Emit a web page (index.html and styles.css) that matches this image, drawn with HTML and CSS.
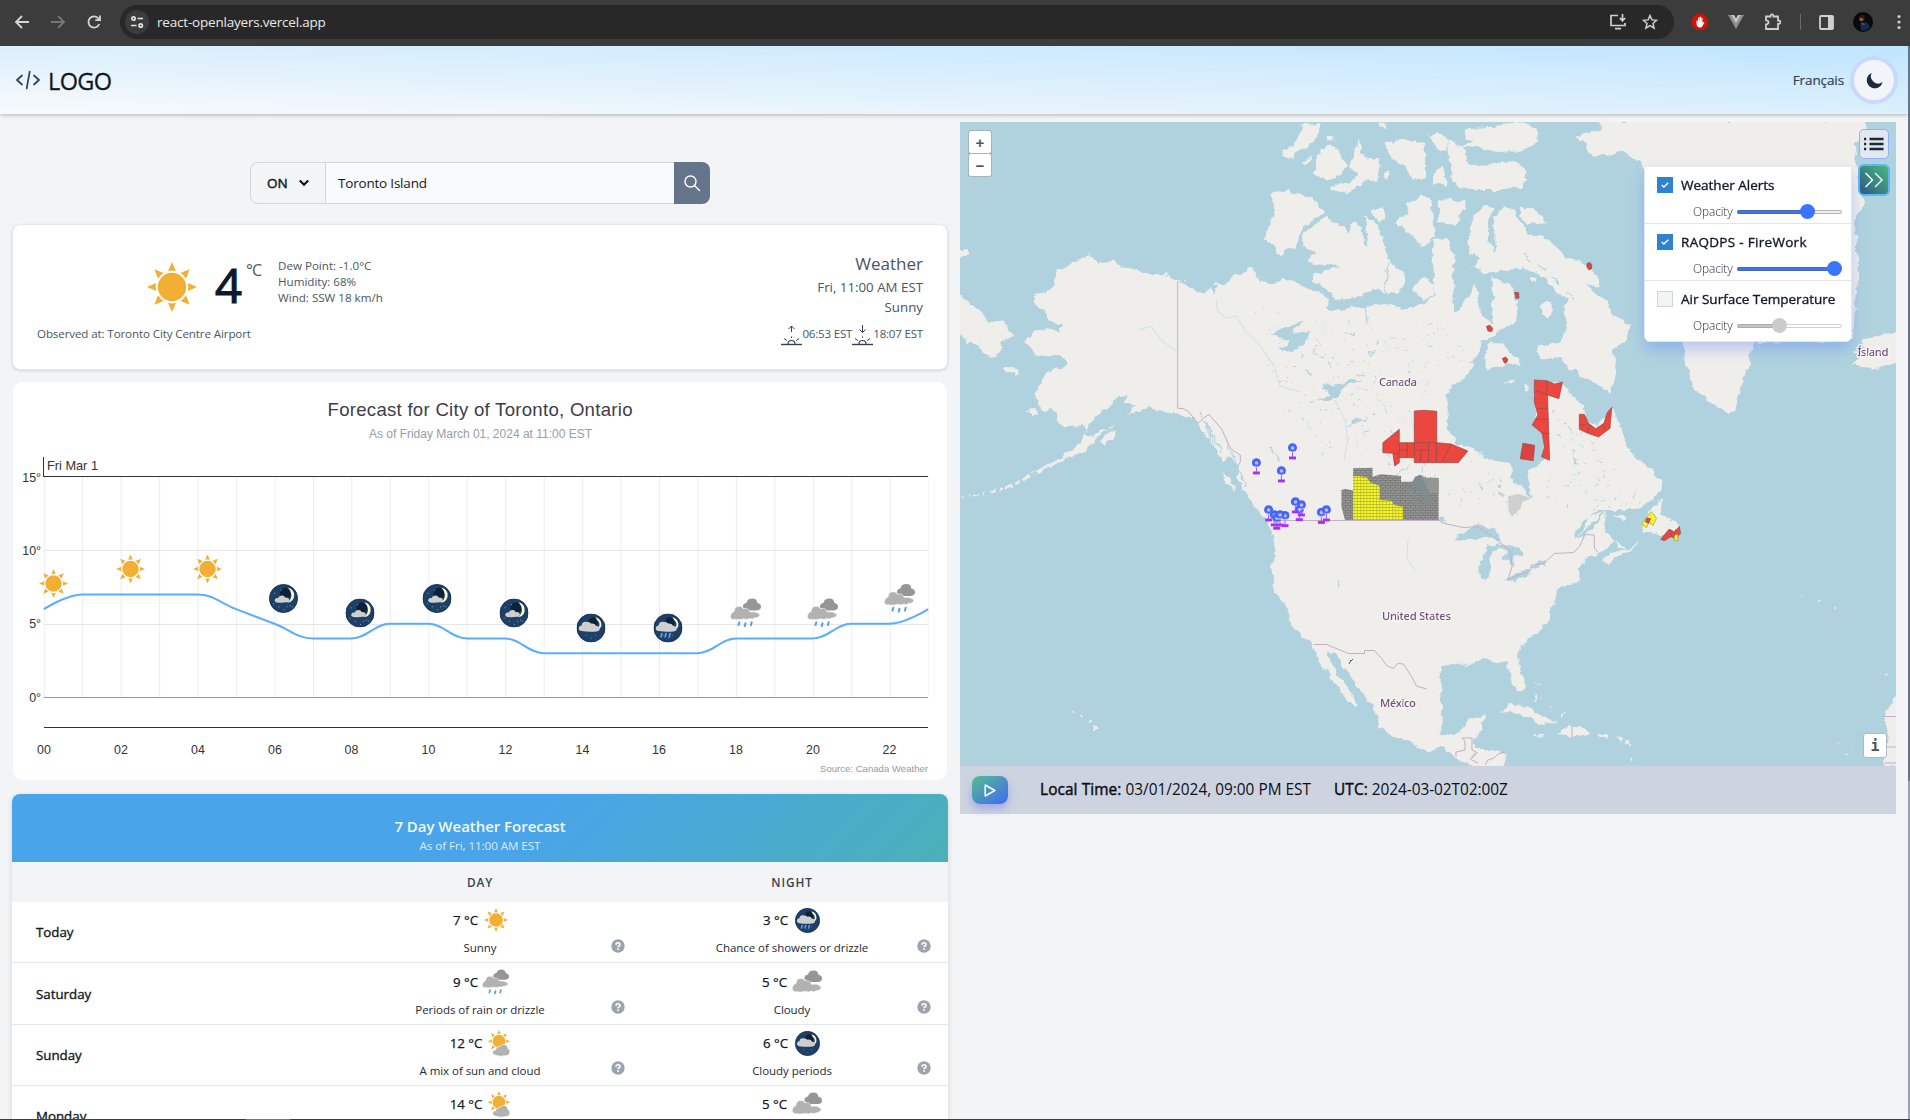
FILE: index.html
```html
<!DOCTYPE html>
<html lang="en">
<head>
<meta charset="utf-8">
<title>Weather map</title>
<link rel="stylesheet" href="styles.css">
</head>
<body>
<svg class="sprite" aria-hidden="true">
  <symbol id="sun" viewBox="0 0 50 50">
    <circle cx="25" cy="25" r="14.2" fill="#f2af33"/>
    <g fill="#f2af33">
      <path d="M25 0l4 9.2q-4-1.2-8 0zM25 50l4-9.200q-4 1.200-8 0zM0 25l9.200-4q-1.200 4 0 8zM50 25l-9.200-4q1.200 4 0 8z"/>
      <path transform="rotate(45 25 25)" d="M25 0l4 9.200q-4-1.200-8 0zM25 50l4-9.200q-4 1.200-8 0zM0 25l9.200-4q-1.200 4 0 8zM50 25l-9.200-4q1.200 4 0 8z"/>
    </g>
  </symbol>
  <symbol id="clouds" viewBox="0 0 30 24">
    <path d="M12.500 9q-.5-4 3.500-4.500 1-4 5.500-4 4.500 0 5 4.300 3.500.5 3.500 3.700t-4 3.500H16z" fill="#969696"/>
    <path d="M4 22q-4-.5-3.700-4T4 13.500q.3-5 5-5 3 0 4 2.300 5-1.500 6.500 3.700 5-1.500 9.500 2 .5 4-5 4.300-2 1.500-4.500.3-3 1.500-6 .2-4.500 1.400-9.500.2z" fill="#b2b2b2" stroke="#fff" stroke-width=".5"/>
  </symbol>
  <symbol id="rain" viewBox="0 0 30 28">
    <path d="M12.500 8.500q-.5-3.500 3.500-4.500 1-4 5.500-4 4.500 0 5 4.300 3.500.5 3.500 3.700t-4 3.500H16z" fill="#969696"/>
    <path d="M4 20.500q-4-.5-3.700-3.500T4 12.500q.3-5 5-5 3 0 4 2.300 5-1.500 6.500 3.200 5-1 9.300 2 .5 3.500-5 3.800-2 1.500-4.500.5-3 1.500-6 .3-4.500 1.400-9.300.4z" fill="#b2b2b2" stroke="#fff" stroke-width=".5"/>
    <path d="M9 23l-.8 2.700M15 24l-.8 2.700M21 23l-.8 2.700" stroke="#5aa2e6" stroke-width="2" stroke-linecap="round"/>
  </symbol>
  <symbol id="mix" viewBox="0 0 30 30">
    <use href="#sun" x="3" y="0" width="25" height="25"/>
    <path d="M12 28q-4-.5-3.500-3.500T12 22q.5-4 4.500-3.500 1.500-3 5-2.500 4 .5 4 4.500 3 1.500 2 5t-6 3q-4 1.500-9.500-.500z" fill="#b2b2b2" stroke="#fff" stroke-width=".7"/>
  </symbol>
  <symbol id="night" viewBox="0 0 28 28">
    <circle cx="14" cy="14" r="13.600" fill="#1c4068" stroke="#122c4a" stroke-width=".8"/>
    <circle cx="16" cy="9" r="5.500" fill="#0d2138"/>
    <path d="M18.300 3.500q6.200 1.500 6 7.500t-6.500 7q4-3.500 3.800-7.500t-3.300-7z" fill="#fbf9d0"/>
    <path d="M7.500 17.800q-2.500-.5-1.800-2.800 1-1.800 3-1.300 1-2.800 4-2.500 2.300.2 3 2 3.300-.5 4 2.300 0 2.300-3 2.200-5 .8-9.200.1z" fill="#cfcfcf"/>
    <path d="M5 9h1M9 22h1M14 25h1M20 21h1M4 19h1M11 6h1M22 22h1M17 22h1" stroke="#8fa9c4" stroke-width=".9"/>
  </symbol>
  <symbol id="night-cloud" viewBox="0 0 28 28">
    <circle cx="14" cy="14" r="13.600" fill="#1c4068" stroke="#122c4a" stroke-width=".8"/>
    <circle cx="16" cy="8" r="4.500" fill="#0d2138"/>
    <path d="M18.300 3.500q6.200 1.500 5.700 8.500-1 3-3.500 3.500 3-5 .8-7.500t-3-4.500z" fill="#fbf9d0"/>
    <path d="M5 17q-3-.3-2.800-3T5 11.500Q5 8 9 8t5 1.700q4-.7 5 2.300 3.500 0 3.500 2.500t-3 2.800q-7 1-14.500-.3z" fill="#cfcfcf"/>
    <path d="M9 21h1M14 24h1M18 21h1" stroke="#6587ab" stroke-width=".9"/>
  </symbol>
  <symbol id="night-rain" viewBox="0 0 28 28">
    <use href="#night-cloud" width="28" height="28"/>
    <path d="M8 19.500l-.7 3M12 19.500l-.7 3M16 19.500l-.7 3" stroke="#5aa2f0" stroke-width="1.700" stroke-linecap="round"/>
  </symbol>
  <symbol id="help" viewBox="0 0 14 14">
    <circle cx="7" cy="7" r="6.700" fill="#9ca3af"/>
    <path d="M5 5.700q0-2 2-2t2 1.700-1.800 1.900v.9" fill="none" stroke="#fff" stroke-width="1.600"/>
    <rect x="6.300" y="9.300" width="1.700" height="1.600" fill="#fff"/>
  </symbol>
  <symbol id="pin" viewBox="-5 -5 10 17">
    <path d="M0 4v5" stroke="#9a55f5"/>
    <rect x="-3.500" y="8.700" width="7" height="3" fill="#a92ffb"/>
    <circle r="4.500" fill="#4664fb"/>
    <circle cx=".1" cy=".2" r="1.800" fill="#b9c4fc"/>
    <path d="M-2.500 3.300q2.500 2.300 5 0" fill="none" stroke="#e5d9fb" stroke-width=".9"/>
  </symbol>
</svg>

<div class="browser">
  <div class="nav">
    <svg width="16" height="16" viewBox="0 0 16 16" fill="none" stroke="#d5d5d5" stroke-width="1.800"><path d="M15 8H2.500M8 2L2 8l6 6"/></svg>
    <svg width="16" height="16" viewBox="0 0 16 16" fill="none" stroke="#777" stroke-width="1.800"><path d="M1 8h12.500M8 2l6 6-6 6"/></svg>
    <svg width="16" height="16" viewBox="0 0 16 16" fill="none" stroke="#d5d5d5" stroke-width="1.800"><path d="M13.300 10A5.600 5.600 0 1 1 12.500 4.500L14 6M14 1.500V6.200H9.300"/></svg>
  </div>
  <div class="omnibox">
    <span class="site"><svg width="14" height="14" viewBox="0 0 14 14" fill="none" stroke="#e2e2e2" stroke-width="1.700"><circle cx="3.500" cy="3.500" r="1.700"/><path d="M7.500 3.500H13M1 10.500h5.500"/><circle cx="10.700" cy="10.500" r="1.700"/></svg></span>
    <span class="url">react-openlayers.vercel.app</span>
    <span class="omni-icons">
      <svg width="18" height="18" viewBox="0 0 18 18" fill="none" stroke="#cfcfcf" stroke-width="1.700"><path d="M9 2.500H2v10h14V10M6 15.700h6M13.500 1v6.500M10.800 5l2.700 2.700L16.200 5"/></svg>
      <svg width="16" height="16" viewBox="0 0 16 16" fill="none" stroke="#cfcfcf" stroke-width="1.500"><path d="M8 1.500l1.900 4.400 4.700.4-3.600 3.100 1.100 4.700L8 11.600l-4.100 2.500L5 9.400 1.400 6.300l4.700-.4z"/></svg>
    </span>
  </div>
  <div class="exts">
    <svg width="16" height="16" viewBox="0 0 16 16"><path d="M4.700 0h6.600L16 4.700v6.600L11.300 16H4.700L0 11.300V4.700z" fill="#d71005"/><path d="M4.500 9V6.500h1.200V8l.3.100V3.700h1.300V7h.3V2.700H9V7h.3V3.700h1.200V9l1-1.200 1 .5-2.300 4.300q-.6.900-2 .9-3.700 0-3.700-4.500z" fill="#fff"/></svg>
    <svg width="16" height="16" viewBox="0 0 16 16"><path d="M0 1h6l2 3.800L10 1h6L8 15z" fill="#8e8e8e"/><path d="M3.300 1H6l2 3.800L10 1h2.700L8 9.300z" fill="#c9c9c9"/></svg>
    <svg width="18" height="18" viewBox="0 0 18 18" fill="none" stroke="#cfcfcf" stroke-width="1.800"><path d="M2 3.500h4.500q-.2-2 1.500-2t1.500 2H14v4q2.300-.2 2.300 1.700T14 11v5H2v-4.500q2.500-.3 2.500-2.200T2 7.300z"/></svg>
    <i class="sep"></i>
    <svg width="15" height="15" viewBox="0 0 15 15"><rect x="1" y="1" width="13" height="13" rx="1" fill="none" stroke="#cfcfcf" stroke-width="1.800"/><path d="M9 1h5v13H9z" fill="#cfcfcf"/></svg>
    <svg width="20" height="20" viewBox="0 0 20 20"><circle cx="10" cy="10" r="10" fill="#07090c"/><path d="M7 11q5-2 8 .5l2 4q-4 4-9 3z" fill="#0f2d52"/><circle cx="8.500" cy="7" r="2.300" fill="#8a5a41"/><path d="M6 6q1-4 5-3l1 5q-3-3-6-2z" fill="#2c1710"/><path d="M8 11l4 1-2 1z" fill="#8a5a41"/></svg>
    <svg width="4" height="16" viewBox="0 0 4 16" fill="#cfcfcf"><circle cx="2" cy="2.500" r="1.600"/><circle cx="2" cy="8" r="1.600"/><circle cx="2" cy="13.500" r="1.600"/></svg>
  </div>
</div>

<div class="viewport">
<div class="page">
  <header class="header">
    <a class="brand"><svg width="24" height="20" viewBox="0 0 24 20" fill="none" stroke="#334155" stroke-width="1.700" stroke-linecap="round" stroke-linejoin="round"><path d="M6 5.500L1 10l5 4.500M18 5.500L23 10l-5 4.500M13.700 1.500l-3 17"/></svg><span>LOGO</span></a>
    <div class="tools"><span class="lang">Français</span>
      <button class="moon"><svg width="17" height="17" viewBox="0 0 17 17"><path d="M6.500.7A8 8 0 1 0 16.300 11 7.300 7.300 0 0 1 6.500.7z" fill="#1e293b" transform="rotate(-6 8 8)"/></svg></button></div>
  </header>

  <main class="columns">
    <section class="left">
      <form class="search">
        <div class="prov"><span>ON</span><svg width="10" height="8" viewBox="0 0 10 8" fill="none" stroke="#111" stroke-width="2.200"><path d="M.8 1.500L5 5.700l4.200-4.200"/></svg></div>
        <div class="city">Toronto Island</div>
        <div class="go"><svg width="18" height="18" viewBox="0 0 18 18" fill="none" stroke="#fff" stroke-width="1.400" stroke-linecap="round"><circle cx="7.500" cy="7.500" r="5.500"/><path d="M11.700 11.700l4.800 4.800"/></svg></div>
      </form>

      <article class="card current">
        <div class="now">
          <div class="now-row">
            <svg class="big-sun" width="50" height="50"><use href="#sun"/></svg>
            <span class="temp">4</span><span class="unit">°C</span>
            <div class="details"><p>Dew Point: -1.0°C</p><p>Humidity: 68%</p><p>Wind: SSW 18 km/h</p></div>
          </div>
          <p class="observed">Observed at: Toronto City Centre Airport</p>
        </div>
        <div class="cond">
          <h2>Weather</h2>
          <p>Fri, 11:00 AM EST</p>
          <p>Sunny</p>
          <div class="suntimes">
            <svg width="21" height="22" viewBox="0 0 21 22" fill="none" stroke="#374151"><path d="M0 20.500h21" stroke-width="1.400"/><path d="M7 20a3.500 3.500 0 0 1 7 0" stroke-width="1.200"/><path d="M10.500 8V2M7.500 5l3-3 3 3M3 14.500l3 2.200M18 14.500l-3 2.200M10.500 12.500v1.500"/></svg><span>06:53 EST</span>
            <svg width="21" height="22" viewBox="0 0 21 22" fill="none" stroke="#374151"><path d="M0 20.500h21" stroke-width="1.400"/><path d="M7 20a3.500 3.500 0 0 1 7 0" stroke-width="1.200"/><path d="M10.500 1v7M7.500 5.500l3 3 3-3M3 14.500l3 2.200M18 14.500l-3 2.200M10.500 12.500v1.500"/></svg><span>18:07 EST</span>
          </div>
        </div>
      </article>

      <article class="chart">
        <svg width="934" height="398" viewBox="13 382 934 398">
          <defs><pattern id="hours" x="43.800" y="0" width="38.450" height="10" patternUnits="userSpaceOnUse"><path d="M.500 0v10" stroke="#ececee"/></pattern></defs>
          <text class="c-title" x="480" y="416" text-anchor="middle" textLength="305">Forecast for City of Toronto, Ontario</text>
          <text class="c-sub" x="480.500" y="438" text-anchor="middle" textLength="223">As of Friday March 01, 2024 at 11:00 EST</text>
          <rect x="43.600" y="477" width="885" height="220" fill="url(#hours)"/>
          <path d="M44 550.500h884M44 624.500h884" stroke="#e6e6e6"/>
          <path d="M44 697.500h884" stroke="#999"/>
          <path d="M43.500 457v20M43 476.500h885M44 727.500h884" stroke="#333" fill="none"/>
          <g class="axis">
            <text x="47" y="470" textLength="51">Fri Mar 1</text>
            <g text-anchor="end"><text x="41" y="481.500">15°</text><text x="41" y="554.500">10°</text><text x="41" y="628">5°</text><text x="41" y="701.500">0°</text></g>
            <g text-anchor="middle"><text x="44" y="754">00</text><text x="121" y="754">02</text><text x="198" y="754">04</text><text x="275" y="754">06</text><text x="351.500" y="754">08</text><text x="428.500" y="754">10</text><text x="505.500" y="754">12</text><text x="582.500" y="754">14</text><text x="659" y="754">16</text><text x="736" y="754">18</text><text x="813" y="754">20</text><text x="889.500" y="754">22</text></g>
          </g>
          <text class="c-src" x="928" y="772" text-anchor="end" textLength="108">Source: Canada Weather</text>
          <path fill="none" stroke="#5aaeff" stroke-width="2" d="M43.800 609.100C43.800 609.100 66.900 594.400 82.300 594.400H197.600C213 594.400 220.700 603.200 236.100 609.100C251.500 615 259.100 617.900 274.500 623.800C289.900 629.700 297.600 638.500 313 638.500H351.400C366.800 638.500 374.500 623.800 389.900 623.800H428.300C443.700 623.800 451.400 638.500 466.800 638.500H505.200C520.600 638.500 528.300 653.200 543.700 653.200H697.500C712.900 653.200 720.500 638.500 735.900 638.500H812.800C828.200 638.500 835.900 623.800 851.300 623.800H889.700C905.100 623.800 928.200 609.100 928.200 609.100"/>
          <use href="#sun" x="39" y="569" width="29" height="29"/><use href="#sun" x="116" y="554.500" width="29" height="29"/><use href="#sun" x="193" y="554.500" width="29" height="29"/>
          <use href="#night" x="269" y="584" width="29" height="29"/><use href="#night" x="345.500" y="598.500" width="29" height="29"/><use href="#night" x="422.500" y="584" width="29" height="29"/><use href="#night" x="499.500" y="598.500" width="29" height="29"/>
          <use href="#night-cloud" x="576.500" y="613.500" width="29" height="29"/><use href="#night-rain" x="653.500" y="613.500" width="29" height="29"/>
          <use href="#rain" x="730" y="598" width="31" height="30"/><use href="#rain" x="807" y="598" width="31" height="30"/><use href="#rain" x="884" y="583.500" width="31" height="30"/>
        </svg>
      </article>

      <article class="week">
        <div class="week-head"><h3>7 Day Weather Forecast</h3><p>As of Fri, 11:00 AM EST</p></div>
        <div class="row cols"><span></span><span>DAY</span><span>NIGHT</span></div>
        <div class="row">
          <b class="day">Today</b>
          <div class="cell"><div class="t">7 °C<svg width="28" height="28"><use href="#sun" x="3" y="2" width="24" height="24"/></svg></div><p>Sunny</p><svg class="help" width="14" height="14"><use href="#help"/></svg></div>
          <div class="cell"><div class="t">3 °C<svg width="31" height="28"><use href="#night-rain" x="5" y="2" width="25" height="25"/></svg></div><p>Chance of showers or drizzle</p><svg class="help" width="14" height="14"><use href="#help"/></svg></div>
        </div>
        <div class="row">
          <b class="day">Saturday</b>
          <div class="cell"><div class="t">9 °C<svg width="28" height="28"><use href="#rain" x="1" y="1" width="27" height="26"/></svg></div><p>Periods of rain or drizzle</p><svg class="help" width="14" height="14"><use href="#help"/></svg></div>
          <div class="cell"><div class="t">5 °C<svg width="33" height="28"><use href="#clouds" x="3" y="2" width="30" height="24"/></svg></div><p>Cloudy</p><svg class="help" width="14" height="14"><use href="#help"/></svg></div>
        </div>
        <div class="row">
          <b class="day">Sunday</b>
          <div class="cell"><div class="t">12 °C<svg width="27" height="28"><use href="#mix" x="0" y="1" width="27" height="27"/></svg></div><p>A mix of sun and cloud</p><svg class="help" width="14" height="14"><use href="#help"/></svg></div>
          <div class="cell"><div class="t">6 °C<svg width="31" height="28"><use href="#night-cloud" x="5" y="2" width="25" height="25"/></svg></div><p>Cloudy periods</p><svg class="help" width="14" height="14"><use href="#help"/></svg></div>
        </div>
        <div class="row">
          <b class="day">Monday</b>
          <div class="cell"><div class="t">14 °C<svg width="27" height="28"><use href="#mix" x="0" y="1" width="27" height="27"/></svg></div></div>
          <div class="cell"><div class="t">5 °C<svg width="33" height="28"><use href="#clouds" x="3" y="2" width="30" height="24"/></svg></div></div>
        </div>
      </article>
    </section>

    <section class="right">
      <div class="map">
        <svg class="canvas" width="936" height="644" viewBox="960 122 936 644">
          <defs>
            <filter id="coast" filterUnits="userSpaceOnUse" x="940" y="100" width="980" height="690"><feTurbulence type="fractalNoise" baseFrequency=".11" numOctaves="3" seed="4"/><feDisplacementMap in="SourceGraphic" scale="8" xChannelSelector="R" yChannelSelector="G"/></filter>
            <filter id="scatter" filterUnits="userSpaceOnUse" x="940" y="100" width="980" height="690"><feTurbulence type="fractalNoise" baseFrequency=".035" numOctaves="3" seed="9"/><feDisplacementMap in="SourceGraphic" scale="60" xChannelSelector="R" yChannelSelector="G"/></filter>
            <pattern id="parcels" width="3.200" height="3" patternUnits="userSpaceOnUse"><path d="M0 .5h3.200M.5 0v3" stroke="#77771c" stroke-width=".6" opacity=".6"/></pattern>
            <pattern id="blocks" width="5" height="5" patternUnits="userSpaceOnUse"><path d="M0 .5h5M.5 0v3M3 3v2M0 3h5" stroke="#555" stroke-width=".6" opacity=".6" fill="none"/></pattern>
            <pattern id="lakes" width="67" height="53" patternUnits="userSpaceOnUse"><path fill="none" stroke="#b0d2de" stroke-width="1.300" d="M3 5l3 1M14 11l1 3M25 3l4 2M41 9l2-2M55 6l1 3M61 17l3-1M8 22l2 2M20 27l5-2M33 19l2 1M47 25l1 3M36 31l4 1M5 38l2-1M17 43l1 3M28 40l3 2M44 44l4-2M57 37l2 2M62 48l1-2M12 50l3 1M52 14l2 1"/></pattern>
          </defs>
          <rect x="960" y="122" width="936" height="644" fill="#b0d2de"/>
          <g fill="#f0eeea" filter="url(#coast)">
            <g transform="translate(960 120) scale(.33333)">
              <path d="M220 545L222 520 258 520 275 500 295 455 320 440 335 425 370 420 387 400 405 410 420 430 445 425 462 425 480 440 510 440 540 455 575 465 620 462 650 483 680 488 715 515 735 525 750 500 770 490 800 490 830 465 850 460 872 440 895 470 915 490 940 495 970 475 1000 485 1040 505 1080 520 1110 540 1095 560 1110 572 1150 572 1180 560 1210 565 1240 545 1280 555 1340 570 1390 570 1460 590 1460 1220 950 1220 905 1180 870 1150 850 1110 835 1080 835 1040 810 1010 790 1020 770 1000 750 960 720 920 690 890 650 880 600 870 560 865 525 875 490 885 475 905 455 925 430 930 415 950 390 975 360 1000 320 1015 290 1030 250 1050 245 1045 290 1020 330 995 365 965 380 930 360 915 300 920 290 880 270 865 260 880 235 850 228 820 240 790 255 765 280 750 315 740 315 720 300 705 260 712 225 705 215 685 195 665 225 635 265 628 300 640 305 610 265 600 255 570z"/>
              <path d="M-30 505L0 525 40 560 75 590 85 605 125 605 160 645 140 655 125 665 120 690 108 715 95 710 65 690 55 670 20 668 0 635-30 620zM-20 385L20 388 30 405 0 418-20 415zM128 742L155 742 180 758 165 765 130 750zM203 870l27-5 5 14-20 4zM420 965l25-30 20-8-5 30-30 20zM785 1060l25 5 5 30 12 22-25-20z"/>
              <path d="M932 222L985 210 1000 222 1040 228 1060 232 1090 275 1060 300 1030 325 1015 350 1005 385 975 395 962 410 945 375 915 360 925 320 942 280 945 258z"/>
              <path d="M1105 283L1115 300 1155 320 1165 340 1180 310 1205 320 1215 375 1225 380 1215 285 1245 305 1260 330 1275 400 1300 435 1335 460 1335 495 1310 520 1240 510 1210 515 1190 535 1125 540 1115 515 1060 490 1058 465 1100 450 1140 445 1120 432 1060 435 1040 415 1070 400 1030 380 1030 345 1060 315z"/>
              <path d="M1395 475L1425 510 1420 530 1390 540 1365 515zM1240 265L1270 262 1275 290 1260 305 1235 280zM1030 15L1080 10 1085 20 1060 70 1040 80 1015 90 1000 120 965 110 975 85 1000 75zM1052 105L1040 140 1025 135zM1085 85L1110 75 1140 100 1165 140 1130 170 1095 180 1055 165 1070 110zM1195 55L1215 120 1255 110 1260 130 1250 180 1210 185 1170 215 1130 215 1110 200 1180 180 1190 160 1170 140 1185 95zM1280 70L1340 60 1395 75 1395 175 1355 180 1340 145 1310 125 1285 100zM1275 155l15 10-10 15-12-10zM1100 48h20v10h-20zM1255 8l20 0 5 22-15-10z"/>
              <path fill="none" stroke="#f0eeea" stroke-width="9" stroke-dasharray="22 9 10 12" d="M250 1046L215 1063 190 1080 150 1100 100 1112"/>
              <path fill="none" stroke="#f0eeea" stroke-width="5" stroke-dasharray="14 12 6 14" d="M100 1112L50 1125 5 1130"/>
            </g>
            <g transform="translate(1360 110) scale(.35077 .33333)">
              <path d="M0 145L35 140 55 170 45 210 5 210zM195 75L230 68 255 95 250 120 215 110zM255 95L290 110 310 160 330 175 380 160 445 152 475 185 470 230 415 240 340 240 270 230 255 150zM280 120L320 90 290 65 310 55 380 50 450 30 505 60 505 95 460 125 390 125 310 110zM230 170L255 210 245 235 205 220 215 180zM225 268L300 272 300 290 275 345 225 340zM130 290L150 270 190 260 205 280 210 380 180 415 150 385 130 365 105 340 110 320 140 310z"/>
              <path d="M310 370L325 315 355 288 388 290 365 330 365 390 390 430 380 350 385 320 410 295 440 295 450 330 470 350 480 375 520 380 545 400 570 420 590 450 640 460 680 500 680 530 640 520 700 570 720 610 770 650 755 700 720 715 730 790 715 855 690 830 620 790 570 745 510 745 505 715 550 700 575 690 590 640 580 600 590 570 560 545 540 520 510 490 470 475 420 480 350 490 320 470 340 445 315 430z"/>
              <path d="M455 290L510 305 530 340 480 345 460 320zM515 580l20-8 15 20-15 28-18-10zM355 775L370 700 400 700 465 765 420 760 390 770zM410 825L440 800 430 820zM468 820l8 0 5 20-8 5zM160 520l25-15 30 25-30 25-35-8zM490 500l14 0-4 18-12-4z"/>
              <path d="M-20 600L90 600 160 590 215 560 205 460 210 390 250 385 270 440 265 500 268 610 290 590 320 540 330 520 345 610 380 640 378 505 430 520 445 560 450 600 440 640 400 660 370 690 350 690 330 740 300 800 260 830 235 870 232 940 265 975 270 1000 330 1020 370 1050 430 1060 435 1110 470 1140 490 1165 485 1120 478 1080 520 1060 540 1050 520 970 500 930 500 870 497 815 530 815 580 820 610 860 635 890 640 930 680 950 718 890 740 940 760 1010 790 1040 830 1080 862 1110 860 1140 820 1180 780 1200 680 1200 640 1230 600 1290 570 1400-20 1400z"/>
              <path d="M610 80L660 70 690 60 680 30 1440 30 1450 80 1410 100 1420 200 1440 280 1410 330 1420 450 1405 690 1120 700 1110 760 1085 830 1070 900 1050 910 1000 880 960 850 930 770 920 700 900 600 820 200 800 150 740 120 700 140 650 130 640 100zM1400 760L1425 745 1405 725 1440 715 1425 690 1470 680 1540 660 1540 755 1460 782 1420 765zM865 1165L850 1210 880 1220 905 1240 910 1275 860 1275 805 1265 810 1240 835 1190zM720 1213l40 8-8 12z"/>
            </g>
            <g transform="translate(960 500) scale(.33333)">
              <path d="M870 0L905 40 935 90 945 140 935 210 945 280 975 320 1005 390 1060 430 1075 480 1105 520 1110 540 1145 570 1160 600 1185 620 1190 610 1165 560 1130 520 1110 480 1100 455 1125 455 1150 500 1180 540 1240 600 1260 640 1260 680 1300 710 1410 752 1440 735 1460 -40 870 -40zM398 672L416 682 400 694zM332 634h10v6h-10zM360 645h8v6h-8zM383 658h14v5h-14z"/>
            </g>
            <g transform="translate(1360 520) scale(.35077 .33333)">
              <path d="M-60-60L570-60 600 40 615 55 640 30 650-10 700-25 700 30 720 50 725 70 680 100 640 120 620 150 630 180 600 195 565 205 560 240 540 265 538 300 520 325 480 355 450 385 447 420 465 470 468 510 450 515 430 475 420 430 385 425 340 420 310 435 280 430 225 440 190 470 190 510 180 540 185 590 215 640 240 645 290 640 305 600 355 588 350 620 330 650 325 690 380 690 415 700 412 750 330 745 270 715 245 685 200 690 150 670 80 640 55 600 50 580 0 510-60 400z"/>
              <path d="M700 110L730 95 780 80 795 58 785 85 740 105 705 135 693 125zM725 62l25 15 10 3-20 4zM398 575L430 556 480 562 530 590 562 612 510 614 480 592 430 572zM562 642L590 620 640 622 658 640 610 652zM678 641h26v9h-26zM497 645L525 645 520 656zM1540 510L1500 575 1493 600 1505 640 1497 730 1540 745zM498 520l8 22-6 0zM500 490h14v3h-14z"/>
            </g>
            <path d="M1539 698l2 2M1550 706l3 2M1560 716l5-2M1627 740l1 8M1631 757l1 4M1616 737l6 3M1818 602h3M1833 608h3M1880 674h1M1887 673h2M1838 742h2M1845 755h2M1850 747h1M1800 596h2" stroke="#f0eeea" stroke-width="1.500"/>
          </g>
          <g fill="#b0d2de" filter="url(#coast)">
            <path transform="translate(960 120) scale(.33333)" d="M930 640L980 620 1025 608 1000 635 1050 630 1040 665 1000 692 955 687 990 665 960 652zM1070 840L1110 820 1080 795 1130 800 1180 775 1200 780 1150 805 1130 830 1105 845zM1165 917L1190 893 1225 900 1190 907zM375 945L400 895 440 868 470 833 505 826 490 850 520 860 500 885 450 925 425 925 400 950zM1035 750l20 10-10 5zM750 495l25 0-15 30z"/>
            <path transform="translate(1360 520) scale(.35077 .33333)" d="M270 55L310 30 335 10 385 30 402 62 360 50 320 57zM345 177L342 120 360 80 400 68 380 92 370 120 368 170 355 180zM385 73L440 78 472 107 440 108 438 142 425 118 408 125 418 95zM412 182L440 163 480 148 487 156 440 185zM485 137L530 120 527 137 490 143zM225-10l12 0 6 14-12 2zM620 52l25-22 50-55 5 5-45 55-30 20z"/>
            <path fill="none" stroke="#b0d2de" stroke-width="1.200" d="M1200 410l6 14 5 16M1206 422l5 10 4 18M1213 435l9 18M1226 440l12 26M1238 466l8 20M1270 447l10 14M1388 262l-4 40M1364 300l4 25M1338 580l3 5M1700 420l-10-8M1770 250l-15-8M1775 270l-14 2M1760 230l-12-12M1730 200l-8-12M1800 310l-14-4M1790 330l-12-8M1560 285l-8-8M1545 270l-8-8M1530 262l-6-10M1575 300l-9-8"/>
          </g>
          <g filter="url(#scatter)" opacity=".9">
            <path fill="url(#lakes)" d="M1250 300L1300 320 1380 330 1450 320 1465 350 1430 380 1425 430 1500 480 1525 510 1400 505 1350 480 1310 440 1270 400z"/>
            <path fill="url(#lakes)" d="M1555 410L1600 440 1640 490 1600 500 1545 505 1550 470z"/>
          </g>
          <path fill="none" stroke="#cfe0e4" d="M1216 300l2 12 9 6 9-2 10 16 16 16 12 18 6 20 20 6M1139 330l12-4 10 14 16 12M1408 540l-1 20 8 10M1335 400l10 20 3 20-4 20"/>
          <g fill="none" stroke="#c3aec2" stroke-width="1">
            <path d="M1177.700 281V408.300L1183 408.500 1188.500 411.500 1198 423.500 1204 417.500 1209 414.500 1221.700 429 1230.700 449 1240.300 455V462L1237.500 466.500"/>
            <path d="M1274.500 520.500H1440L1442 523 1463.500 527.500 1477 526.700 1497.500 540 1510.500 551.500 1512 566.500 1508 579.500 1530.700 570 1531.500 565 1543 564 1554.500 553.500 1573.500 552.500 1579.500 546.500 1585 534.500 1594 535 1594.500 548 1598 552.500"/>
            <path d="M1313.500 644.500H1326.500L1348.500 653.500H1364.500V650.500H1374.500L1381.500 658.500 1386.500 665.500 1393.500 668.500 1397.500 663.500 1403.500 664 1411.500 676.500 1416.500 686 1426.500 689"/>
            <path d="M1456 757v-5l9-2v-9l-3-3h10v12l4 2-6 7 8 4M1478 752l-6 6M1572 727v10M1883 716.500h13M1886 747h10M1884 763h12M1485 765l3-5 6-2 4-4 6-2"/>
          </g>
          <g class="land-label"><text x="1379" y="386" textLength="38">Canada</text><text x="1382" y="619.500" textLength="69">United States</text><text x="1380" y="707" textLength="36">México</text><text x="1857.500" y="355.500" textLength="31">Ísland</text></g>
          <g transform="translate(1160 360) scale(.35714 .33333)">
            <path fill="#959593" d="M508 390L520 386 541 392 541 325 595 323 595 350 620 343 675 348 675 365 705 365 725 345 745 354 780 354 780 480 518 480 508 440z"/>
            <path fill="#f6f72f" d="M541 347L578 352 590 370 615 378 615 420 648 422 655 435 680 440 680 480 541 480z"/>
            <path fill="#cfcfcf" d="M975 408L1005 402 1040 415 1015 425 1010 445 985 470 975 450zM946 374h9v10h-9zM947 392l18 12-4 8-14-10zM952 360h5v5h-5z"/>
            <g fill="#ec473f" stroke="#8d4a4a" stroke-width="2">
              <path d="M624 248L670 208 670 248 712 248 712 153 740 151 775 154 775 248 815 252 862 273 835 308 712 308 712 293 670 293 670 308 657 318 652 280 624 278z"/>
              <path d="M1048 60L1083 62 1105 72 1127 66 1117 116 1085 105 1091 301 1068 290 1077 262 1070 220 1042 195 1058 165 1048 125z"/>
              <path fill="#dc4340" d="M1016 250L1049 256 1045 302 1009 296z"/>
              <path d="M1174 163L1188 163 1200 190 1220 206 1243 190 1252 158 1265 142 1260 205 1228 231 1196 219 1174 208z"/>
              <path d="M1402 538L1425 508 1440 515 1454 500 1458 520 1444 536 1430 530 1412 542z"/>
              <path fill="#f4f52f" stroke="#9b9b45" d="M1349 492L1375 455 1384 465 1390 475 1380 497 1370 485 1362 503zM1440 524h10v18h-10z"/>
              <path d="M1362 474l12 2-6 14-8-4z"/>
              <path fill="none" d="M670 248v45M692 248v45M670 270h22M712 248v45M712 248h64M730 270v38M712 270h40M752 248v60M774 248v60M815 252l-25 54M652 280h18M1083 62v42M1053 93l32 12M1056 145h28M1052 178h36M1068 220h22M1174 195h14l10-4M1204 196l-8 22M1240 192l8 22M1430 508v22M1444 508l-4 20"/>
            </g>
          </g>
          <path fill="url(#blocks)" d="M1341.500 490H1353V468H1372.500V477L1381 474.500 1401 476 1401 482 1412 482 1419 475 1438.500 478V520H1345L1341.500 506z"/>
          <path fill="#959593" d="M1419 474.500L1426 478 1438.500 478V493H1430z"/>
          <path transform="translate(1160 360) scale(.35714 .33333)" fill="#7f8c92" d="M705 372L714 350 730 345 742 368 752 405 764 440 750 440 722 385zM690 370l20 20 16 50 8 4-8 10-20-50-16-20z"/>
          <path fill="#f6f72f" d="M1353 476L1366 477 1371 483 1380 486V500L1391 501 1394 505 1403 507V520H1353z"/>
          <path fill="url(#parcels)" d="M1353 476L1366 477 1371 483 1380 486V500L1391 501 1394 505 1403 507V520H1353z"/>
          <g fill="#e04540" stroke="#8d4a4a" stroke-width=".7"><path d="M1587 263.500l3-1 1.800 2.500-.5 4-2.500.8-2-3zM1514.500 292.500h4l.5 5.500-3 .5zM1486.500 326.500l3-1.500 3 3-.5 3.500-4-.5zM1502.500 358.500l3-1.500 2.300 2-.8 3-2 1.500-1.500-2z"/></g>
          <g transform="translate(0 .5)"><use href="#pin" x="1287.500" y="442.300" width="10" height="17"/><use href="#pin" x="1251.400" y="457.300" width="10" height="17"/><use href="#pin" x="1276.400" y="465.300" width="10" height="17"/><use href="#pin" x="1294.300" y="504" width="10" height="17"/><use href="#pin" x="1290.400" y="496.300" width="10" height="17"/><use href="#pin" x="1296.400" y="499.300" width="10" height="17"/><use href="#pin" x="1263.600" y="504.300" width="10" height="17"/><use href="#pin" x="1269.300" y="509.300" width="10" height="17"/><use href="#pin" x="1280" y="510" width="10" height="17"/><use href="#pin" x="1271.800" y="512.500" width="10" height="17"/><use href="#pin" x="1275" y="509.300" width="10" height="17"/><use href="#pin" x="1316.400" y="506.700" width="10" height="17"/><use href="#pin" x="1321.400" y="504.300" width="10" height="17"/></g>
          <path d="M1349 664l2-4M1351 661l2-2" stroke="#555" fill="none"/>
        </svg>

        <div class="zoomer"><button>+</button><button>−</button></div>
        <button class="legend"><svg width="20" height="14" viewBox="0 0 20 14" stroke="#1e293b" stroke-width="2.300"><path d="M5.500 2H19.500M5.500 7H19.500M5.500 12H19.500M0 2h2.200M0 7h2.200M0 12h2.200"/></svg></button>
        <button class="collapse"><svg width="20" height="16" viewBox="0 0 20 16" fill="none" stroke="#fff" stroke-width="1.400"><path d="M1.500 1l7 7-7 7M11 1l7 7-7 7"/></svg></button>
        <div class="layers">
          <div class="layer"><i class="box on"><svg width="8" height="6" viewBox="0 0 8 6" fill="none" stroke="#fff" stroke-width="1.400"><path d="M.7 3l2.200 2L7.300.8"/></svg></i><span>Weather Alerts</span><div class="opacity"><label>Opacity</label><div class="track"><i class="fill" style="width:71px"></i><i class="thumb" style="left:62px"></i></div></div></div>
          <div class="layer"><i class="box on"><svg width="8" height="6" viewBox="0 0 8 6" fill="none" stroke="#fff" stroke-width="1.400"><path d="M.7 3l2.200 2L7.300.8"/></svg></i><span class="wide">RAQDPS - FireWork</span><div class="opacity"><label>Opacity</label><div class="track"><i class="fill" style="width:98px"></i><i class="thumb" style="left:89px"></i></div></div></div>
          <div class="layer"><i class="box"></i><span>Air Surface Temperature</span><div class="opacity off"><label>Opacity</label><div class="track"><i class="fill" style="width:43px"></i><i class="thumb" style="left:34px"></i></div></div></div>
        </div>
        <button class="info">i</button>
      </div>
      <div class="player">
        <button class="play"><svg width="12" height="13" viewBox="0 0 12 13" fill="none" stroke="#fff" stroke-width="1.500" stroke-linejoin="round"><path d="M1.200 1v11l9.600-5.500z"/></svg></button>
        <p class="local"><b>Local Time:</b> 03/01/2024, 09:00 PM EST</p>
        <p class="utc"><b>UTC:</b> 2024-03-02T02:00Z</p>
      </div>
    </section>
  </main>
</div>
<div class="edge"></div>
</div>
<div class="taskline"><i></i></div>
</body>
</html>
```
FILE: styles.css
```css
* { box-sizing: border-box; margin: 0; padding: 0; }
body { width: 1910px; height: 1120px; overflow: hidden; display: grid; grid-template-rows: 46px 1073px 1px; background: #f3f4f6; font-family: "Open Sans", "Noto Sans", sans-serif; color: #111827; }
button { border: 0; font: inherit; display: flex; align-items: center; justify-content: center; }
svg { display: block; flex: none; }
.sprite { position: absolute; width: 0; height: 0; }

/* browser bar */
.browser { background: #3c3c3c; display: flex; height: 46px; padding: 5px 10px 7px 14px; }
.nav { display: flex; align-items: center; gap: 20px; width: 106px; }
.omnibox { width: 1554px; height: 34px; border-radius: 17px; background: #282828; display: flex; align-items: center; padding: 0 16px 0 5px; }
.site { width: 24px; height: 24px; border-radius: 50%; background: #3c3c3c; display: flex; align-items: center; justify-content: center; }
.url { margin-left: 8px; font-size: 13.5px; letter-spacing: -.2px; color: #e8e8e8; flex: 1; }
.omni-icons { display: flex; align-items: center; gap: 15px; }
.exts { display: flex; align-items: center; flex: 1; padding-left: 18px; gap: 20px; }
.sep { width: 1px; height: 16px; background: #6a6a6a; margin: 0 -2px; }
.exts svg:nth-child(6) { margin-left: -1px; }
.exts svg:last-child { margin-left: 4px; }

/* page frame */
.viewport { display: grid; grid-template-columns: 1908px 2px; height: 1073px; overflow: hidden; }
.page { overflow: hidden; }
.edge { background: linear-gradient(#64748b 735px, #94a3b8 735px); }
.taskline { background: #3f3f3f; padding-left: 246px; }
.taskline i { display: block; width: 44px; height: 1px; background: #777; }

.header { height: 68px; display: flex; align-items: center; justify-content: space-between; padding: 0 10px 0 16px; background: linear-gradient(to top right, #f9fafb, #bfe5ff); box-shadow: 0 1px 4px rgba(0, 0, 0, .28); position: relative; }
.brand { display: flex; align-items: center; gap: 8px; font-size: 23.5px; letter-spacing: -.6px; line-height: 34px; }
.brand span { margin-top: 2px; -webkit-text-stroke: .3px; }
.tools { display: flex; align-items: center; gap: 6px; }
.lang { font-size: 13.5px; letter-spacing: -.1px; color: #334155; -webkit-text-stroke: .2px; }
.moon { width: 48px; height: 48px; border-radius: 50%; background: #f1f5f9; border: 4px solid #c7dafd; }

.columns { display: grid; grid-template-columns: 936px 936px; gap: 12px; padding: 8px 12px 0; }

/* search */
.search { display: flex; width: 460px; height: 42px; margin: 40px 0 21px 238px; font-size: 13.5px; line-height: 40px; }
.prov { width: 76px; border: 1px solid #d1d5db; border-radius: 8px 0 0 8px; background: #f3f4f6; display: flex; align-items: center; justify-content: space-between; padding: 0 16px 0 16px; -webkit-text-stroke: .45px; }
.prov svg { -webkit-text-stroke: 0; }
.city { flex: 1; border: solid #d1d5db; border-width: 1px 0; background: #f9fafb; padding-left: 12px; letter-spacing: -.2px; }
.go { width: 36px; border-radius: 0 8px 8px 0; background: #64748b; display: flex; align-items: center; justify-content: center; }

/* current conditions */
.current { height: 146px; margin: -1px 0 12px; border: 1px solid #e5e7eb; border-radius: 8px; background: #fff; box-shadow: 0 1px 3px rgba(0, 0, 0, .13); display: flex; justify-content: space-between; padding: 29px 24px 0; color: #4b5563; font-size: 11.6px; }
.now-row { display: flex; padding-left: 110px; height: 68px; }
.big-sun { margin-top: 8px; }
.temp { font-size: 47px; line-height: 60px; color: #0f172a; margin: 1px 0 0 18px; width: 31px; -webkit-text-stroke: 1.2px; }
.unit { font-size: 16px; line-height: 20px; margin-top: 6px; letter-spacing: -.8px; width: 32px; }
.details { line-height: 16px; margin-top: 4px; letter-spacing: 0; }
.observed { line-height: 16px; margin-top: 4px; letter-spacing: -.12px; }
.cond { text-align: right; }
.cond h2 { font-weight: 400; font-size: 17px; line-height: 24px; margin-top: -2px; }
.cond p { font-size: 13.3px; line-height: 20px; }
.cond h2 + p { margin-top: 1px; }
.suntimes { display: flex; justify-content: flex-end; height: 22px; margin-top: 7px; line-height: 19px; letter-spacing: -.22px; }

/* hourly chart */
.chart { width: 934px; height: 398px; margin: 0 1px 14px; border-radius: 10px; background: #fff; overflow: hidden; font-family: "Liberation Sans", Arial, sans-serif; }
.c-title { font-size: 18.6px; fill: #3d3d4a; }
.c-sub { font-size: 12px; fill: #9a9ca6; }
.axis { font-size: 12.8px; fill: #333; }
.axis g { font-size: 12.4px; }
.c-src { font-size: 9.6px; fill: #999; }

/* seven day table */
.week { border-radius: 8px; overflow: hidden; background: #fff; box-shadow: 0 2px 6px rgba(0, 0, 0, .12); }
.week-head { height: 68px; background: linear-gradient(135deg, #4aa4ea 54%, #4bb0b8); color: #fff; text-align: center; padding-top: 21px; }
.week-head h3 { font-size: 15px; line-height: 22px; font-weight: 600; letter-spacing: -.03px; color: #f3f8ff; }
.week-head p { font-size: 11.6px; line-height: 18px; color: #dcecfb; letter-spacing: -.05px; }
.row { display: grid; grid-template-columns: 312px 312px 312px; height: 61.4px; border-bottom: 1px solid #e5e7eb; align-items: center; font-size: 13.3px; }
.row.cols { height: 40px; border: 0; background: #f3f4f6; font-size: 11.8px; font-weight: 600; letter-spacing: .9px; text-align: center; color: #374151; }
.day { font-weight: 400; -webkit-text-stroke: .35px; padding-left: 24px; }
.cell { position: relative; height: 60px; padding-top: 4px; text-align: center; }
.t { display: flex; align-items: center; justify-content: center; line-height: 28px; height: 28px; gap: 3px; white-space: pre; padding-left: 2px; -webkit-text-stroke: .25px; }
.cell:last-child .t { padding-left: 0; gap: 2px; }
.cell p { font-size: 11.5px; line-height: 16px; margin-top: 6px; letter-spacing: -.05px; color: #1f2937; }
.help { position: absolute; right: 11px; top: 36.500px; }
.cell:last-child .help { right: 17px; }

/* map */
.map { position: relative; height: 644px; overflow: hidden; }
.land-label { font: 500 11.3px "Noto Sans", sans-serif; fill: #74507b; stroke: #f6f4f2; stroke-width: 3px; paint-order: stroke; stroke-linejoin: round; }
.zoomer { position: absolute; left: 8px; top: 8px; padding: 1px; display: grid; gap: 1px; background: #a3b4bc; border-radius: 3px; }
.zoomer button { width: 22px; height: 22px; padding-top: 2px; background: #fff; color: #555; font: 700 15px/20px "Liberation Sans", sans-serif; border-radius: 2px; }
.legend { position: absolute; left: 899px; top: 7px; width: 30px; height: 30px; border-radius: 5px; background: #e2e8f0; border: 1px solid #93b1ee; }
.collapse { position: absolute; left: 898px; top: 42px; width: 32px; height: 32px; border-radius: 6px; border: 2px solid #5cb8f8; background: linear-gradient(to top right, #2c5a88, #4ab87a); }
.layers { position: absolute; left: 684px; top: 44px; width: 208px; height: 176px; background: #fff; border: 1px solid #e5e7eb; border-radius: 0 0 6px 6px; box-shadow: 0 8px 14px rgba(80, 120, 255, .32); }
.layer { height: 57px; border-bottom: 1px solid #e2e4e8; padding: 10px 0 0 12px; display: grid; grid-template-columns: 24px 1fr; grid-template-rows: 17px 1fr; font-size: 13.5px; line-height: 17px; white-space: nowrap; }
.layer:last-child { border: 0; }
.layer span { -webkit-text-stroke: .35px; letter-spacing: 0; }
.layer span.wide { letter-spacing: .3px; }
.box { width: 16px; height: 16px; border: 1px solid #d1d5db; background: #f3f4f6; display: flex; align-items: center; justify-content: center; }
.box.on { background: #3182ce; border-color: #3182ce; }
.opacity { grid-column: 1 / 3; display: flex; align-items: center; padding: 7px 0 0 36px; font-size: 11.9px; font-weight: 300; color: #1f2937; height: 28px; }
.opacity label { width: 44px; letter-spacing: -.1px; }
.track { position: relative; width: 105px; height: 4px; border: 1px solid #b4b4b4; border-radius: 2px; background: #efefef; }
.fill { display: block; height: 4px; margin: -1px; border-radius: 2px; background: #3b75f8; border: solid #4a68b0; border-width: 1px 0; }
.thumb { position: absolute; top: -6.5px; width: 15px; height: 15px; border-radius: 50%; background: #3b75ff; }
.off .fill { background: #c4c4c4; border-color: #aaa; }
.off .thumb { background: #cbcbcb; }
.off .track { border-color: #d0d0d0; background: #fff; }
.info { position: absolute; left: 903px; top: 611px; width: 24px; height: 25px; border-radius: 3px; border: 1px solid #a9bcc6; background: #fff; color: #555; font: 700 15px "DejaVu Sans Mono", monospace; }

.player { height: 48px; background: #cdd4e0; display: flex; align-items: center; font-size: 15.4px; line-height: 22px; color: #0b0f19; padding-left: 12px; }
.player b { font-weight: 400; -webkit-text-stroke: .45px; letter-spacing: .1px; }
.play { width: 36px; height: 28px; border-radius: 8px; background: linear-gradient(to bottom right, #54bd8c, #4169f5); box-shadow: 0 5px 9px rgba(80, 100, 245, .35); }
.local { margin-left: 32px; width: 294px; }
.utc { letter-spacing: -.05px; }
```
